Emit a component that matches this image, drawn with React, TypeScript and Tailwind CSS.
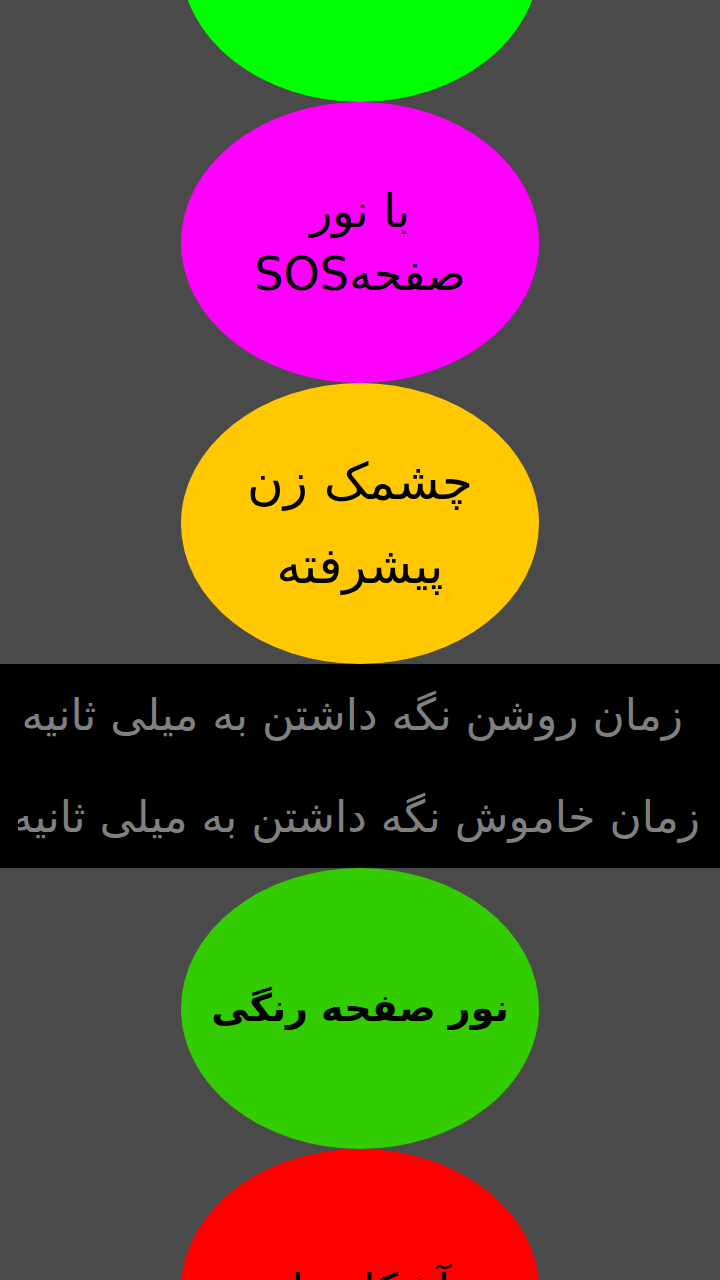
import React from "react";

const fa = "font-['DejaVu_Sans',sans-serif]";

export default function App() {
  return (
    <div className="w-[720px] h-[1280px] overflow-hidden bg-[#4a4a4a] flex flex-col items-center">
      {/* top button, mostly scrolled off */}
      <div className="w-[358px] h-[281px] shrink-0 mt-[-179px] rounded-[50%] bg-[#00ff00]" />

      <div className={`w-[358px] h-[281px] shrink-0 rounded-[50%] bg-[#ff00ff] flex flex-col items-center justify-center text-black text-[46px] leading-[63px] ${fa}`} dir="rtl">
        <span>با نور</span>
        <span>صفحهSOS</span>
      </div>

      <div className={`w-[358px] h-[281px] shrink-0 rounded-[50%] bg-[#ffc800] flex flex-col items-center justify-center text-black text-[50px] leading-[84px] ${fa}`} dir="rtl">
        <span>چشمک زن</span>
        <span>پیشرفته</span>
      </div>

      <div className={`w-full h-[204px] shrink-0 bg-black flex flex-col text-[#808080] text-[44px] ${fa}`} dir="rtl">
        <div className="h-[102px] flex items-center pr-[37px] whitespace-nowrap overflow-hidden">
          زمان روشن نگه داشتن به میلی ثانیه
        </div>
        <div className="h-[102px] flex items-center pr-[20px] ml-[18px] overflow-hidden whitespace-nowrap">
          زمان خاموش نگه داشتن به میلی ثانیه
        </div>
      </div>

      <div className={`w-[358px] h-[281px] shrink-0 rounded-[50%] bg-[#33cc00] flex items-center justify-center text-black text-[38px] font-bold ${fa}`} dir="rtl">
        نور صفحه رنگی
      </div>

      <div className={`w-[358px] h-[281px] shrink-0 rounded-[50%] bg-[#ff0000] flex items-center justify-center text-black text-[44px] ${fa}`} dir="rtl">
        آشکارساز
      </div>
    </div>
  );
}
